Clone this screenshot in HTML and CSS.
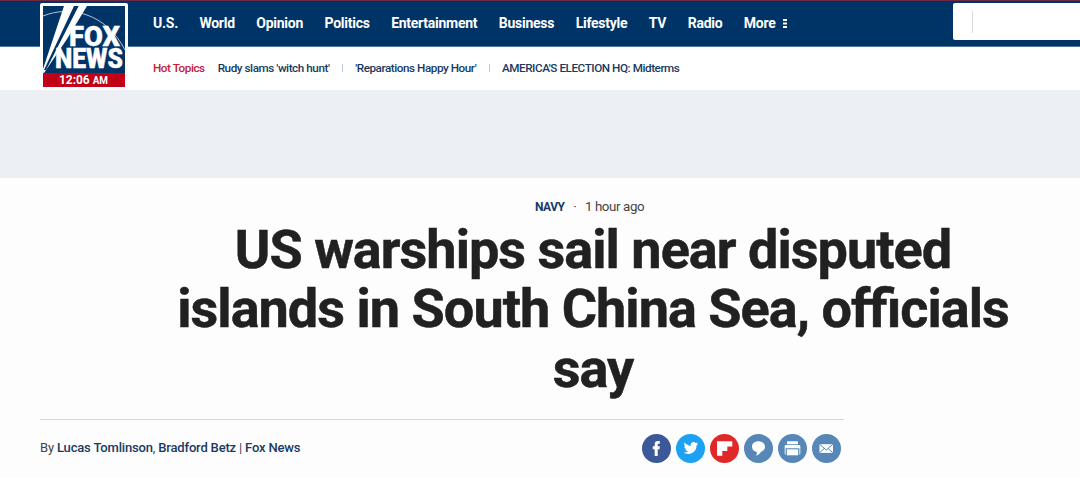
FILE: index.html
```html
<!DOCTYPE html>
<html lang="en">
	<head>
		<meta charset="UTF-8" />
		<meta name="viewport" content="width=device-width, initial-scale=1.0" />
		<title>US warships sail near disputed islands in South China Sea, officials say | Fox News</title>
		<link rel="stylesheet" href="styles.css">
	</head>
	<body>
		<header class="site-header">
			<a class="logo" href="#">
				<svg width="88" height="87" viewBox="0 0 88 87">
					<rect width="88" height="87" rx="2" fill="#fff" />
					<rect x="3" y="3" width="82" height="67" fill="#003366" />
					<path d="M3 13C30 2 66 10 85 47" fill="none" stroke="#b4c5d8" stroke-width="1" />
					<path d="M24 3H34.500L5 67L3 70V66Z" fill="#fff" />
					<path d="M38.500 3H47L27 36L4 70H3Z" fill="#fff" />
					<path d="M34 3H38.500L6 67H4Z" fill="#003366" />
					<g class="logo-name">
						<text x="29" y="42.500" textLength="51" lengthAdjust="spacingAndGlyphs">FOX</text>
						<text x="15" y="65.300" textLength="68" lengthAdjust="spacingAndGlyphs">NEWS</text>
					</g>
					<rect x="3" y="70" width="82" height="14" fill="#c20017" />
					<text class="logo-time" x="19" y="81.300" textLength="49" lengthAdjust="spacingAndGlyphs">12:06 <tspan class="ampm">AM</tspan></text>
				</svg>
			</a>
			<div class="nav-bar">
				<nav class="main-nav">
					<a href="#">U.S.</a>
					<a href="#">World</a>
					<a href="#">Opinion</a>
					<a href="#">Politics</a>
					<a href="#">Entertainment</a>
					<a href="#">Business</a>
					<a href="#">Lifestyle</a>
					<a href="#">TV</a>
					<a href="#">Radio</a>
					<a class="more" href="#">More
						<svg width="4" height="9" viewBox="0 0 4 9" fill="#fff"><path d="M0 0H4V2H0ZM0 3.500H4V5.500H0ZM0 7H4V9H0Z" /></svg>
					</a>
				</nav>
				<div class="search"></div>
			</div>
			<div class="hot-topics">
				<span class="title">Hot Topics</span>
				<a href="#">Rudy slams 'witch hunt'</a>
				<a href="#">'Reparations Happy Hour'</a>
				<a href="#">AMERICA'S ELECTION HQ: Midterms</a>
			</div>
		</header>

		<div class="ad"></div>

		<article>
			<div class="article-meta">
				<a href="#">NAVY</a>
				<span class="dot">·</span>
				<time>1 hour ago</time>
			</div>
			<h1>US warships sail near disputed islands in South China Sea, officials say</h1>
			<div class="article-info">
				<div class="author">By <a href="#">Lucas Tomlinson</a>, <a href="#">Bradford Betz</a> | <a href="#">Fox News</a></div>
				<div class="share">
					<a class="facebook" href="#" aria-label="Facebook">
						<svg viewBox="0 0 29 29"><path d="M12.700 22V15.300H10.800V12.200H12.700V10.300C12.700 8 13.800 7 15.900 7H17.800V9.800H16.600C15.900 9.800 15.700 10.100 15.700 10.800V12.200H17.800L17.500 15.300H15.700V22Z" /></svg>
					</a>
					<a class="twitter" href="#" aria-label="Twitter">
						<svg viewBox="0 0 29 29"><path d="M22 9.500C21.500 9.700 20.900 9.900 20.300 10C20.900 9.600 21.400 9 21.600 8.300C21 8.600 20.400 8.900 19.700 9C17.700 7 14.200 8.500 14.800 11.700C12.300 11.600 10.100 10.500 8.600 8.500C7.700 10 8.200 11.700 9.500 12.600C9 12.600 8.600 12.400 8.200 12.200C8.200 13.700 9.200 14.900 10.600 15.200C10.200 15.300 9.700 15.300 9.300 15.300C9.700 16.500 10.800 17.300 12.100 17.300C10.800 18.300 9.300 18.700 7.700 18.500C13.500 22.200 20.700 18.400 20.600 11.300C21.200 10.800 21.700 10.200 22 9.500Z" /></svg>
					</a>
					<a class="flipboard" href="#" aria-label="Flipboard">
						<svg viewBox="0 0 29 29"><path d="M7 7.300H22.300V12.500H17.300V17H12.300V21.700H7Z" /></svg>
					</a>
					<a href="#" aria-label="Comments">
						<svg viewBox="0 0 29 29"><path d="M14.500 7.300C10.600 7.300 8 9.700 8 12.700C8 15.400 10 17.400 12.800 17.900C13 19.500 12.600 20.700 12.100 21.700C14.600 20.800 16.200 19.500 17 17.700C19.500 16.900 21 15 21 12.700C21 9.700 18.400 7.300 14.500 7.300Z" /></svg>
					</a>
					<a href="#" aria-label="Print">
						<svg viewBox="0 0 29 29"><rect x="9" y="7.200" width="11" height="3" rx=".8" /><path d="M6.700 12C6.700 11.500 7.100 11.100 7.600 11.100H21.400C21.900 11.100 22.300 11.500 22.300 12V19.500C22.300 20.100 21.900 20.500 21.400 20.500V14.300H7.600V20.500C7.100 20.500 6.700 20.100 6.700 19.500Z" /><path d="M8.800 15.300H20.200V21.300H8.800Z" /></svg>
					</a>
					<a href="#" aria-label="Email">
						<svg viewBox="0 0 29 29"><rect x="7.500" y="10.200" width="13.500" height="8.700" /><path class="fold" d="M7.700 10.400L14.250 16L20.800 10.400M7.700 18.700L12.400 14.400M20.800 18.700L16.100 14.400" /></svg>
					</a>
				</div>
			</div>
		</article>
	</body>
</html>
```
FILE: styles.css
```css
* {
	margin: 0;
	padding: 0;
	box-sizing: border-box;
}

body {
	height: 478px;
	overflow: hidden;
	background-color: #fdfdfe;
	font-family: Roboto, sans-serif;
	color: #444;
}
a {
	text-decoration: none;
	color: #183a62;
}
svg {
	display: block;
}

.site-header {
	position: relative;
	height: 90px;
	background-color: #fff;
}
.logo {
	position: absolute;
	left: 40px;
	top: 3px;
}
.logo-name {
	font-size: 27px;
	font-weight: 900;
	fill: #fff;
	stroke: #fff;
	stroke-width: 0.4px;
}
.logo-time {
	font-size: 12px;
	font-weight: 700;
	fill: #fff;
}
.ampm {
	font-size: 10px;
}

.nav-bar {
	display: flex;
	justify-content: space-between;
	height: 47px;
	padding-left: 153px;
	background-color: #003366;
	border-top: 1px solid #702846;
	border-bottom: 1px solid #50769a;
}
.main-nav {
	display: flex;
	align-items: center;
	gap: 21.5px;
	height: 44px;
}
.main-nav a {
	font-size: 14px;
	font-weight: 700;
	letter-spacing: -0.26px;
	color: #fff;
}
.main-nav .more {
	display: flex;
	align-items: center;
	gap: 7px;
}
.search {
	width: 127px;
	height: 37px;
	margin-top: 2px;
	padding: 8px 0 0 19px;
	background-color: #fff;
	border-radius: 2px 0 0 2px;
}
.search::before {
	content: '';
	display: block;
	height: 22px;
	border-left: 1px solid #ddd;
}

.hot-topics {
	display: flex;
	align-items: center;
	height: 42px;
	padding-left: 153px;
	font-size: 11.7px;
	font-weight: 500;
	letter-spacing: -0.44px;
}
.hot-topics .title {
	margin-right: 13px;
	color: #c4203a;
}
.hot-topics a + a::before {
	content: '';
	display: inline-block;
	height: 8px;
	margin: 0 12.4px;
	border-left: 1px solid #b9c9d8;
}

.ad {
	height: 88px;
	background-color: #ecf0f4;
}

.article-meta {
	display: flex;
	align-items: baseline;
	height: 18px;
	margin-top: 21px;
	padding-left: 535px;
	font-size: 13.3px;
	letter-spacing: -0.38px;
}
.article-meta a {
	font-size: 12px;
	font-weight: 700;
	letter-spacing: -0.5px;
}
.article-meta .dot {
	margin: 0 8.7px;
}
h1 {
	width: 862px;
	margin: 3px 0 0 162px;
	font-size: 54px;
	font-weight: 700;
	line-height: 59.3px;
	letter-spacing: -0.97px;
	font-feature-settings: 'liga' 1;
	-webkit-text-stroke: 0.5px #212121;
	text-align: center;
	color: #212121;
}
.article-info {
	display: flex;
	justify-content: space-between;
	align-items: center;
	width: 804px;
	height: 58px;
	margin: 21px 0 0 40px;
	padding-right: 3px;
	border-top: 1px solid #ccd9e6;
}
.author {
	padding-bottom: 2px;
	font-size: 13px;
	letter-spacing: -0.17px;
}
.author a {
	font-weight: 500;
}
.share {
	display: flex;
	gap: 5px;
}
.share a {
	width: 29px;
	height: 29px;
	border-radius: 50%;
	background-color: #5787b7;
}
.share svg {
	fill: #fff;
}
.share .facebook {
	background-color: #3b5998;
}
.share .twitter {
	background-color: #1da1f2;
}
.share .flipboard {
	background-color: #e12828;
}
.fold {
	fill: none;
	stroke: #5787b7;
}
```
